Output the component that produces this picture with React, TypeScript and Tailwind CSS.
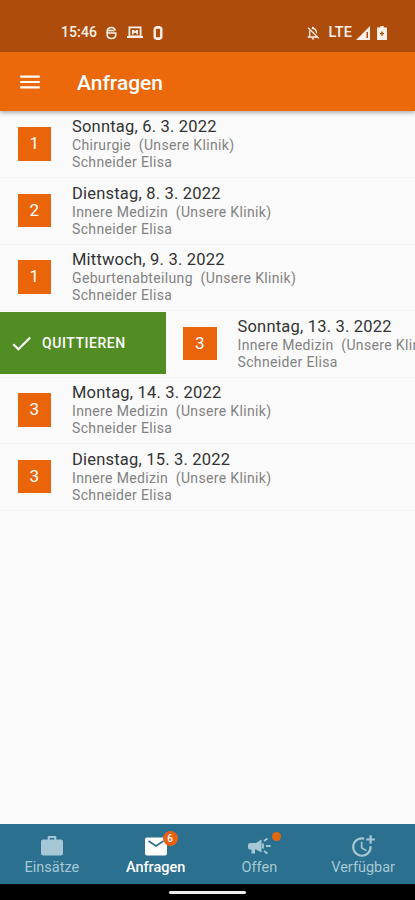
import type { ReactNode } from "react";
import { MdCheck, MdMenu, MdMoreTime, MdOutlineNotificationsOff } from "react-icons/md";

type Request = {
  count: number;
  date: string;
  place: string;
  swiped?: boolean;
};

const requests: Request[] = [
  { count: 1, date: "Sonntag, 6. 3. 2022", place: "Chirurgie" },
  { count: 2, date: "Dienstag, 8. 3. 2022", place: "Innere Medizin" },
  { count: 1, date: "Mittwoch, 9. 3. 2022", place: "Geburtenabteilung" },
  { count: 3, date: "Sonntag, 13. 3. 2022", place: "Innere Medizin", swiped: true },
  { count: 3, date: "Montag, 14. 3. 2022", place: "Innere Medizin" },
  { count: 3, date: "Dienstag, 15. 3. 2022", place: "Innere Medizin" },
];

function StatusBar() {
  return (
    <div className="h-[52px] shrink-0 bg-[#ae4c0c] pt-[22.5px] text-[#fff1ea]">
      <div className="flex h-5 items-center pl-[61px] pr-[28px]">
        <span className="w-[45px] text-[14px] font-medium tracking-[0.1px]">15:46</span>
        <svg className="h-[14px] w-[11px]" viewBox="0 0 12 14" fill="none" stroke="currentColor" strokeWidth="1.8">
          <path d="M10.3 4.2C9.6 2 8.200 1 6 1 3.200 1 1.300 2.700 1.300 5.500V9c0 2.500 1.900 4 4.700 4s4.600-1.500 4.600-4V7H2" />
          <path d="M2 4.300h7" />
        </svg>
        <svg className="ml-[10px] h-[13px] w-4" viewBox="0 0 16 13" fill="currentColor">
          <path fillRule="evenodd" d="M1.500 .5h13v9.500H16v2H0v-2h1.500zM3.300 2.300v7.200h9.400V2.300z" />
          <path d="M5 8.500V4h2l1 1.500L9 4h2v4.500H9.500V7h-3v1.500z" />
        </svg>
        <svg className="ml-[10px] h-[14px] w-[10px]" viewBox="0 0 10 14" fill="none" stroke="currentColor">
          <rect x="1.700" y="1.500" width="6.600" height="11" rx="2" strokeWidth="2.400" />
          <path d="M3 .7h4M3 13.300h4" strokeWidth="1.400" />
        </svg>
        <MdOutlineNotificationsOff className="ml-auto size-4" />
        <span className="ml-2 text-[14.5px] font-medium tracking-[0.1px]">LTE</span>
        <svg className="ml-1 h-[14px] w-[14px]" viewBox="0 0 14 14" fill="currentColor">
          <path fillRule="evenodd" d="M14 0v14H0zM10.500 6v6H12V6z" />
        </svg>
        <svg className="ml-[7px] h-[14px] w-[10px]" viewBox="0 0 10 14" fill="currentColor">
          <path fillRule="evenodd" d="M3.300 0h3.400v1.500H10V14H0V1.500h3.300zM4.300 5.500v1.400H3v1.400h1.300v1.500h1.400V8.300H7V6.900H5.700V5.500z" />
        </svg>
      </div>
    </div>
  );
}

function RequestRow({ count, date, place, swiped }: Request) {
  return (
    <li className="flex h-[66.6px] overflow-hidden border-b border-[#f4f4f4]">
      {swiped && (
        <button className="mt-px flex h-[62px] w-[165.5px] shrink-0 items-center bg-[#528d23] pl-[9px] text-white">
          <MdCheck className="size-[25px]" />
          <span className="ml-2 text-[14px] font-medium tracking-[0.55px]">QUITTIEREN</span>
        </button>
      )}
      <div className="flex shrink-0 pl-[17.5px]">
        <div className="mt-[15.5px] flex size-[33.5px] items-center justify-center bg-[#ea640a] text-[17px] text-white">
          {count}
        </div>
        <div className="ml-[21px] whitespace-pre pt-[5.5px]">
          <div className="text-[16.5px] leading-[20px] tracking-[0.2px] text-[#333]">{date}</div>
          <div className="text-[14px] leading-[17px] tracking-[0.35px] text-[#828282]">{place}  (Unsere Klinik)</div>
          <div className="text-[14px] leading-[17px] tracking-[0.35px] text-[#828282]">Schneider Elisa</div>
        </div>
      </div>
    </li>
  );
}

function NavItem({ label, active, children }: { label: string; active?: boolean; children: ReactNode }) {
  return (
    <button className={`flex flex-1 flex-col items-center pt-[8.5px] ${active ? "text-white" : "text-[#a6c8d6]"}`}>
      <span className="relative flex h-[26px] w-[26px] items-center justify-center">{children}</span>
      <span className={`text-[14.5px] leading-[17px] ${active ? "font-medium" : ""}`}>{label}</span>
    </button>
  );
}

export default function App() {
  return (
    <div className="flex h-[900px] w-[415px] flex-col overflow-hidden bg-[#fafafa] font-[Roboto,sans-serif]">
      <StatusBar />
      <header className="z-10 flex h-[59px] shrink-0 items-center bg-[#eb680b] pl-[17px] pt-1 text-white shadow-[0_2px_4px_rgba(0,0,0,0.3)]">
        <MdMenu className="mb-[3px] size-[26px]" />
        <h1 className="ml-[34px] text-[21px] font-medium">Anfragen</h1>
      </header>
      <ul className="flex-1 pt-[0.5px]">
        {requests.map((r) => (
          <RequestRow key={r.date} {...r} />
        ))}
      </ul>
      <nav className="flex h-[60px] shrink-0 bg-[#2b708e]">
        <NavItem label="Einsätze">
          <svg className="size-[26px]" viewBox="0 0 26 26">
            <rect x="2" y="6.500" width="22" height="16" rx="2" fill="currentColor" />
            <path d="M9.700 7V4h6.600v3" fill="none" stroke="currentColor" strokeWidth="2" strokeLinejoin="round" />
          </svg>
        </NavItem>
        <NavItem label="Anfragen" active>
          <svg className="size-[26px]" viewBox="0 0 26 26">
            <rect x="2" y="4.500" width="22" height="18" rx="2" fill="currentColor" />
            <path d="M5.500 8 13 13l7.500-5" fill="none" stroke="#2b708e" strokeWidth="1.600" />
          </svg>
          <span className="absolute -right-[9px] -top-[1.5px] flex size-[15px] items-center justify-center rounded-full bg-[#e95f16] text-[10px] font-medium text-white">
            6
          </span>
        </NavItem>
        <NavItem label="Offen">
          <svg className="size-[26px]" viewBox="0 0 26 26">
            <path
              d="M4 10h6l5.500-3.500v13L10 16.500H9v4H5.500v-4H4a2 2 0 0 1-2-2V12a2 2 0 0 1 2-2z"
              fill="currentColor"
            />
            <path
              d="M18 8l3.500-2.500M20 13h4.500M18 18l3.500 2.500M16.500 10.500q1.500 2.500 0 5"
              fill="none"
              stroke="currentColor"
              strokeWidth="2"
            />
          </svg>
          <span className="absolute -right-[9px] -top-px size-[9px] rounded-full bg-[#e2690f]" />
        </NavItem>
        <NavItem label="Verfügbar">
          <MdMoreTime className="size-[26px]" />
        </NavItem>
      </nav>
      <div className="flex h-4 shrink-0 items-center justify-center bg-black">
        <div className="h-[3px] w-[77px] rounded-full bg-[#eee]" />
      </div>
    </div>
  );
}
